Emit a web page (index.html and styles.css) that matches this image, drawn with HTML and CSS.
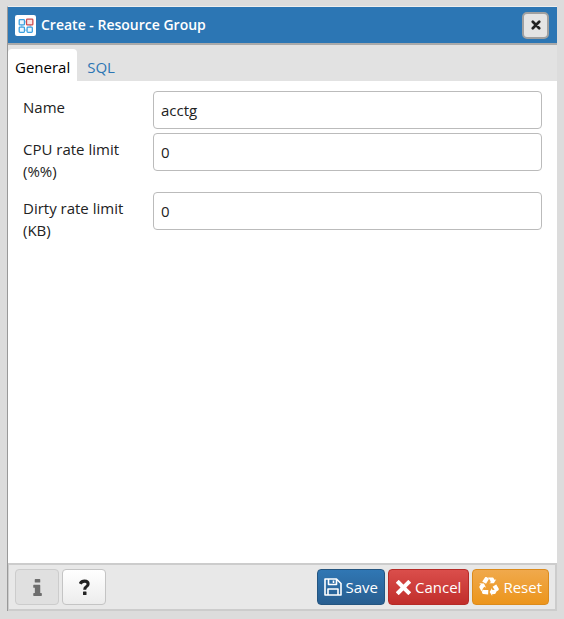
FILE: index.html
```html
<!DOCTYPE html>
<html lang="en">
<head>
<meta charset="utf-8">
<meta name="viewport" content="width=device-width, initial-scale=1">
<title>Create - Resource Group</title>
<link rel="stylesheet" href="styles.css">
</head>
<body>
<main class="dialog" role="dialog" aria-labelledby="dialog-title">
  <header class="titlebar">
    <svg class="logo" viewBox="0 0 20 20" aria-hidden="true">
      <rect width="20" height="20" rx="2" fill="#fff"/>
      <g stroke-width="1.2">
        <path d="M9 6.500h3M6.500 9v3M14.500 9v3M9 14.500h3" stroke="#9acdf0"/>
        <g fill="#eaf6fe" stroke="#3ba0e0">
          <rect x="4" y="4.500" width="5" height="5" rx=".8"/>
          <rect x="4" y="11.500" width="5" height="5" rx=".8"/>
          <rect x="11.500" y="11.500" width="5" height="5" rx=".8"/>
        </g>
        <rect x="11" y="4" width="6" height="5.500" rx=".8" fill="#fbe3e3" stroke="#cc4a4d"/>
      </g>
    </svg>
    <h1 class="title" id="dialog-title">Create - Resource Group</h1>
    <button class="close" type="button" aria-label="Close">
      <svg viewBox="0 0 10 10" aria-hidden="true"><path d="M1.800 1.800l6.400 6.400M8.200 1.800l-6.400 6.400" stroke="#222" stroke-width="2.700" stroke-linecap="round"/></svg>
    </button>
  </header>
  <nav class="tabs">
    <a class="tab tab-active" href="#general">General</a>
    <a class="tab" href="#sql">SQL</a>
  </nav>
  <form class="form" id="general">
    <div class="row">
      <label for="name">Name</label>
      <input id="name" type="text" value="acctg">
    </div>
    <div class="row">
      <label for="cpu">CPU rate limit (%%)</label>
      <input id="cpu" type="text" value="0">
    </div>
    <div class="row">
      <label for="dirty">Dirty rate limit (KB)</label>
      <input id="dirty" type="text" value="0">
    </div>
  </form>
  <footer class="footer">
    <button class="btn btn-light btn-info" type="button" disabled aria-label="Information">
      <svg class="icon-small" viewBox="0 0 10 16" aria-hidden="true"><path fill="#6e6e6e" d="M3 0h4q.6 0 .6.600v2.200q0 .6-.6.600H3q-.6 0-.6-.600V.6Q2.400 0 3 0zM1.600 5.500h5.400q.6 0 .6.600v7.100h.9q.6 0 .6.600v1.600q0 .6-.6.600H1.600q-.6 0-.6-.600v-1.600q0-.6.6-.600h.9V8.300h-.9q-.6 0-.6-.600V6.100q0-.6.6-.600z"/></svg>
    </button>
    <button class="btn btn-light" type="button" aria-label="Help">
      <svg class="icon-small" viewBox="0 0 10 16" aria-hidden="true"><path d="M1 4.500Q2.200 2 5 2q3.400 0 3.400 2.800 0 1.600-1.700 2.500Q5.200 8.200 5.200 10" fill="none" stroke="#222" stroke-width="2.900"/><rect x="3.600" y="11.800" width="3.300" height="3.300" rx=".5" fill="#222"/></svg>
    </button>
    <span class="spacer"></span>
    <button class="btn btn-save" type="button">
      <svg class="icon" viewBox="0 0 18 18" aria-hidden="true"><path d="M1 1h11.500L17 5.500V17H1zM4.500 1v5.500h8V1M4 17v-6h10v6M9.500 2.500V5" fill="none" stroke="#fff" stroke-width="1.600" stroke-linejoin="round"/></svg>
      Save
    </button>
    <button class="btn btn-cancel" type="button">
      <svg class="icon-cross" viewBox="0 0 14 14" aria-hidden="true"><path d="M2.500 2.500l9 9M11.500 2.500l-9 9" stroke="#fff" stroke-width="3.800" stroke-linecap="square"/></svg>
      Cancel
    </button>
    <button class="btn btn-reset" type="button">
      <svg class="icon-recycle" viewBox="0 0 1792 1792" aria-hidden="true"><path fill="#fff" d="M836 1169l-15 368-2 22-420-29q-36-3-67-31.500t-47-65.500q-11-27-14.500-55t4-65 12-55 21.500-64 19-53q78 12 509 28zM449 583l180 379-147-92q-63 72-111.500 144.500t-72.500 125-39.500 94.500-18.500 63l-4 21-190-357q-17-26-18-56t6-47l8-18q35-63 114-188l-140-86zM1680 1100l-188 359q-12 29-36.500 46.500t-43.500 20.500l-18 4q-71 7-219 12l8 164-230-367 211-362 7 173q170 16 283 5t170-33zM895 176q-47 63-265 435l-317-187-19-12 225-356q20-31 60-45t80-10q24 2 48.500 12t42 21 41.500 33 36 34.500 36 39.500 32 35zM1550 661l212 363q18 37 12.500 76t-27.500 74q-13 20-33 37t-38 28-48.500 22-47 16-51.500 14-46 12q-34-72-265-436l313-195zM1407 279l142-83-220 373-419-20 151-86q-34-89-75-166t-75.500-123.500-64.500-80-47-46.500l-17-13 405 1q31-3 58 10.500t39 28.500l11 15q39 61 112 190z"/></svg>
      Reset
    </button>
  </footer>
</main>
</body>
</html>
```

FILE: styles.css
```css
* {
  box-sizing: border-box;
}

body {
  margin: 0;
  min-height: 100vh;
  display: flex;
  padding: 6px 7px 8px;
  background: #dcdcdc;
  color: #222;
  font: 15px/22px "Open Sans", "Noto Sans", sans-serif;
}

.dialog {
  flex: 1;
  display: flex;
  flex-direction: column;
  min-width: 0;
  background: #fff;
  border-top: 1px solid #eee;
  border-left: 1px solid #999;
}

.titlebar {
  display: flex;
  align-items: center;
  height: 38px;
  padding: 0 8px 0 7px;
  background: #2c76b4;
  border-bottom: 2px solid #aaa;
}

.logo {
  width: 21px;
  height: 21px;
}

.title {
  flex: 1;
  margin: 0 0 0 5px;
  color: #fff;
  font-size: 14px;
  font-weight: 600;
}

.close {
  display: grid;
  place-items: center;
  width: 27px;
  height: 27px;
  padding: 0;
  background: #e4e4e4;
  border: 2px solid #a0a0a0;
  border-radius: 5px;
}

.close svg {
  width: 10px;
  height: 10px;
}

.tabs {
  display: flex;
  align-items: flex-end;
  height: 36px;
  background: #e2e2e2;
}

.tab {
  padding: 7px 10px 3px;
  color: #2c76b4;
  text-decoration: none;
}

.tab-active {
  padding: 7px 7px 3px;
  background: #fff;
  border-radius: 4px 4px 0 0;
  color: #000;
}

.form {
  flex: 1;
  padding: 10px 15px;
}

.row {
  display: grid;
  grid-template-columns: 130px 1fr;
  align-items: start;
  margin-bottom: 4px;
}

.row + .row {
  margin-bottom: 10px;
}

.row label {
  padding: 5px 16px 0 0;
}

.row input {
  width: 100%;
  height: 38px;
  padding: 0 7px;
  background: #fff;
  border: 1px solid #bbb;
  border-radius: 4px;
  color: #222;
  font: inherit;
}

.footer {
  display: flex;
  align-items: center;
  gap: 3px;
  height: 48px;
  padding: 0 6px;
  background: #e8e8e8;
  border: 2px solid #ccc;
  border-left-width: 1px;
}

.spacer {
  flex: 1;
}

.btn {
  display: flex;
  align-items: center;
  justify-content: center;
  gap: 4px;
  height: 36px;
  padding: 0 6px;
  border: 1px solid;
  border-radius: 4px;
  color: #fff;
  font: inherit;
}

.btn-light {
  width: 44px;
  background: linear-gradient(#fff, #ececec);
  border-color: #c4c4c4;
}

.btn-info {
  background: #e0e0e0;
  border-color: #ccc;
}

.btn-save {
  background: linear-gradient(#3077b4, #285e90);
  border-color: #245580;
}

.btn-cancel {
  padding: 0 7px;
  background: linear-gradient(#da4e4b, #c12e2b);
  border-color: #b52b27;
}

.btn-reset {
  background: linear-gradient(#f0a94c, #ec951c);
  border-color: #dc8b1c;
}

.icon {
  width: 18px;
  height: 18px;
}

.icon-small {
  width: 11px;
  height: 17px;
}

.icon-cross {
  width: 15px;
  height: 15px;
}

.icon-recycle {
  width: 20px;
  height: 20px;
}
```
